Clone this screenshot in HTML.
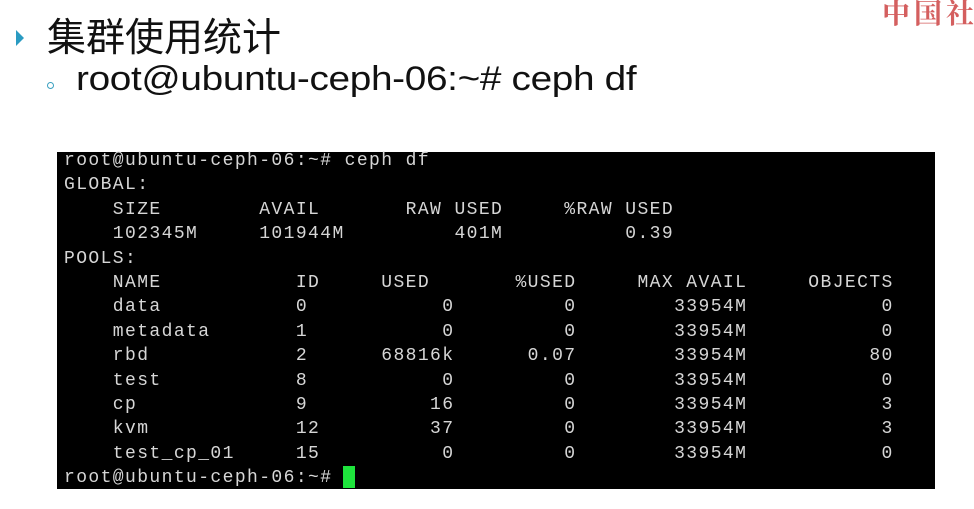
<!DOCTYPE html>
<html><head><meta charset="utf-8"><style>
html,body{margin:0;padding:0}
body{width:974px;height:509px;background:#fff;position:relative;overflow:hidden;font-family:"Liberation Sans","Noto Sans CJK SC",sans-serif}
.tri{position:absolute;left:16px;top:30px;width:0;height:0;border-top:8px solid transparent;border-bottom:8px solid transparent;border-left:8px solid #2a9bc2}
.t1{position:absolute;left:47px;top:10px;font-size:39px;color:#111;font-family:"Noto Sans CJK SC",sans-serif;line-height:50px}
.dot{position:absolute;left:47px;top:82px;width:5px;height:5px;border:1px solid #3aa0c0;border-radius:50%}
.t2{position:absolute;left:76px;top:56px;font-size:34px;color:#111;line-height:46px;letter-spacing:-0.3px;transform:scaleX(1.14);transform-origin:left;white-space:nowrap}
.wm{position:absolute;left:882px;top:-8px;font-size:28px;font-weight:bold;color:#c62a2a;font-family:"Noto Serif CJK SC",serif;opacity:.75;letter-spacing:4px;white-space:nowrap}
.term{position:absolute;left:57px;top:152px;width:878px;height:337px;background:#000}
pre{position:absolute;left:7px;top:-3px;margin:0;font-family:"Liberation Mono",monospace;font-size:18px;letter-spacing:1.4px;line-height:24.4px;color:#d6d6d6}
.cur{position:absolute;left:286px;top:314px;width:12px;height:22px;background:#1ee43c}
</style></head><body>
<div class="tri"></div>
<div class="t1">集群使用统计</div>
<div class="dot"></div>
<div class="t2">root@ubuntu-ceph-06:~# ceph df</div>
<div class="wm">中国社</div>
<div class="term"><pre>root@ubuntu-ceph-06:~# ceph df
GLOBAL:
    SIZE        AVAIL       RAW USED     %RAW USED
    102345M     101944M         401M          0.39
POOLS:
    NAME           ID     USED       %USED     MAX AVAIL     OBJECTS
    data           0           0         0        33954M           0
    metadata       1           0         0        33954M           0
    rbd            2      68816k      0.07        33954M          80
    test           8           0         0        33954M           0
    cp             9          16         0        33954M           3
    kvm            12         37         0        33954M           3
    test_cp_01     15          0         0        33954M           0
root@ubuntu-ceph-06:~# </pre><div class="cur"></div></div>
</body></html>
